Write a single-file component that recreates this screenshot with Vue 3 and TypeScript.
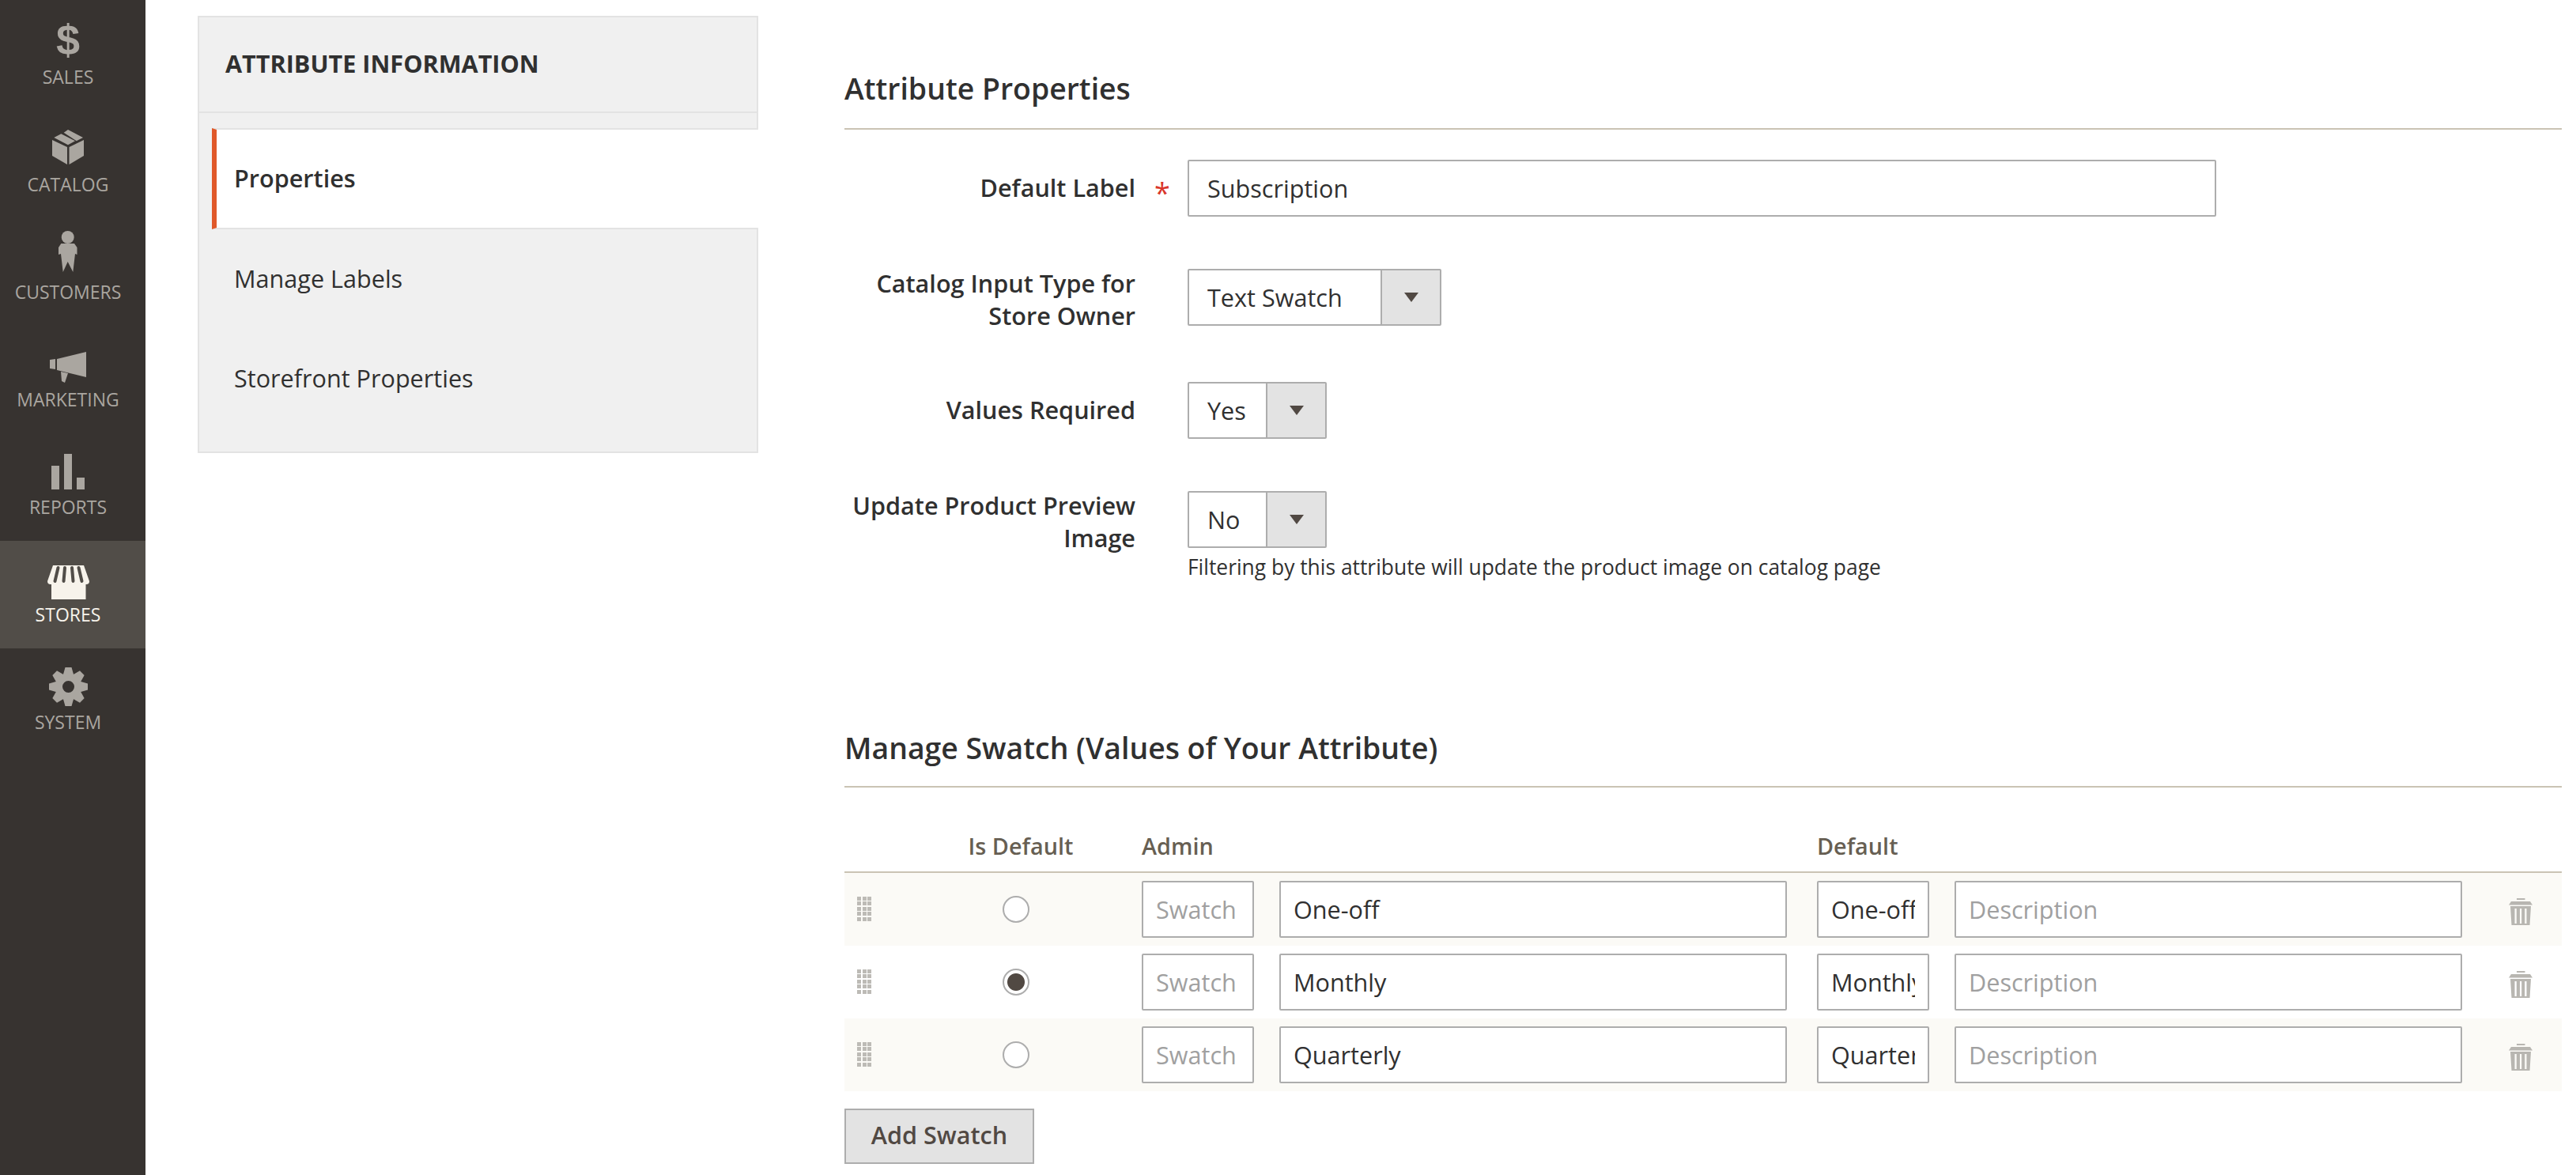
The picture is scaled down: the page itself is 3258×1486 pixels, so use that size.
<template>
  <div class="admin">
    <nav class="sidebar">
      <a class="nav-item">
        <span class="nav-icon"><span class="dollar">$</span></span>
        <span class="nav-label">SALES</span>
      </a>
      <a class="nav-item">
        <span class="nav-icon">
          <svg width="40" height="44" viewBox="0 0 40 44" fill="currentColor">
            <polygon points="0,13 19,22 19,44 0,33"></polygon>
            <polygon points="21.5,22 40,13 40,33 21.5,44"></polygon>
            <polygon points="2.3,10 11.3,5.3 29,14.3 20,19.3"></polygon>
            <polygon points="14.7,3.7 20,0 39,10 30.7,14.3"></polygon>
          </svg>
        </span>
        <span class="nav-label">CATALOG</span>
      </a>
      <a class="nav-item">
        <span class="nav-icon">
          <svg class="icon-customers" width="24" height="52" viewBox="0 0 24 52" fill="currentColor">
            <circle cx="11.7" cy="8" r="8"></circle>
            <polygon points="3.3,16 20,16 23.5,21 23.5,30 21,29 18.3,52 11.7,39 5.7,52 3,29 0,30 0,21"></polygon>
          </svg>
        </span>
        <span class="nav-label">CUSTOMERS</span>
      </a>
      <a class="nav-item">
        <span class="nav-icon">
          <svg class="icon-marketing" width="46" height="39" viewBox="0 0 46 39" fill="currentColor">
            <polygon points="0,10 7,9 7,22 0,21"></polygon>
            <polygon points="9,9 46,0 46,32 9,23"></polygon>
            <polygon points="14,25 23,27 19,39 15,37"></polygon>
          </svg>
        </span>
        <span class="nav-label">MARKETING</span>
      </a>
      <a class="nav-item">
        <span class="nav-icon">
          <svg class="icon-reports" width="42" height="45" viewBox="0 0 42 45" fill="currentColor">
            <rect x="0" y="15" width="10" height="30"></rect>
            <rect x="16" y="0" width="10" height="45"></rect>
            <rect x="32" y="30" width="10" height="15"></rect>
          </svg>
        </span>
        <span class="nav-label">REPORTS</span>
      </a>
      <a class="nav-item active">
        <span class="nav-icon">
          <svg class="icon-stores" width="53" height="43" viewBox="0 0 53 43" fill="currentColor">
            <rect x="5" y="20" width="43.5" height="23"></rect>
            <path d="M7 0H46L53 20Q53 24 49 24H4Q0 24 0 20Z"></path>
            <path d="M13.5 3L9.5 20M22 3L20.5 20M31 3L32.5 20M39.5 3L43.5 20" fill="none" stroke="#514d48" stroke-width="4" stroke-linecap="round"></path>
          </svg>
        </span>
        <span class="nav-label">STORES</span>
      </a>
      <a class="nav-item">
        <span class="nav-icon">
          <svg class="icon-system" width="49" height="49" viewBox="-24.5 -24.5 49 49" fill="currentColor">
            <circle r="12" fill="none" stroke="currentColor" stroke-width="9"></circle>
            <polygon
              v-for="angle in gearTeeth"
              :key="angle"
              points="-7,-14 -4,-24.5 4,-24.5 7,-14"
              :transform="`rotate(${angle})`"
            ></polygon>
          </svg>
        </span>
        <span class="nav-label">SYSTEM</span>
      </a>
    </nav>

    <div class="page">
      <aside class="tabs">
        <h3 class="tabs-title">ATTRIBUTE INFORMATION</h3>
        <ul class="tabs-list">
          <li class="tab active">Properties</li>
          <li class="tab">Manage Labels</li>
          <li class="tab">Storefront Properties</li>
        </ul>
      </aside>

      <main class="content">
        <h2 class="section-title">Attribute Properties</h2>

        <div class="form-row">
          <label class="form-label">Default Label<span class="required">*</span></label>
          <input class="text-input wide" type="text" value="Subscription" />
        </div>

        <div class="form-row two-line">
          <label class="form-label">Catalog Input Type for Store Owner</label>
          <div class="select">
            <span class="select-value long">Text Swatch</span>
            <span class="select-arrow"></span>
          </div>
        </div>

        <div class="form-row">
          <label class="form-label">Values Required</label>
          <div class="select">
            <span class="select-value">Yes</span>
            <span class="select-arrow"></span>
          </div>
        </div>

        <div class="form-row last">
          <label class="form-label">Update Product Preview Image</label>
          <div>
            <div class="select">
              <span class="select-value">No</span>
              <span class="select-arrow"></span>
            </div>
            <p class="note">Filtering by this attribute will update the product image on catalog page</p>
          </div>
        </div>

        <h2 class="section-title swatch-title">Manage Swatch (Values of Your Attribute)</h2>

        <div class="swatch-head">
          <span class="head-default">Is Default</span>
          <span class="head-admin">Admin</span>
          <span class="head-store">Default</span>
        </div>

        <div class="swatch-rows">
          <div v-for="row in swatches" :key="row.name" class="swatch-row">
            <span class="drag-handle"><i v-for="n in 15" :key="n"></i></span>
            <input class="radio" type="radio" name="is-default" :checked="row.isDefault" />
            <input class="text-input swatch-narrow" type="text" placeholder="Swatch" />
            <input class="text-input swatch-wide" type="text" :value="row.name" />
            <input class="text-input swatch-narrow" type="text" :value="row.name" />
            <input class="text-input swatch-wide" type="text" placeholder="Description" />
            <span class="trash">
              <svg width="30" height="34" viewBox="0 0 30 34" fill="currentColor">
                <rect x="10" y="0" width="10.5" height="2"></rect>
                <polygon points="3,4 27,4 30,8.5 0,8.5"></polygon>
                <path fill-rule="evenodd" d="M2 10H28L26.5 34H3.5ZM7.5 13V32H9.8V13ZM14 13V32H16.2V13ZM20.2 13V32H22.5V13Z"></path>
              </svg>
            </span>
          </div>
        </div>

        <button class="add-swatch" type="button">Add Swatch</button>
      </main>
    </div>
  </div>
</template>

<script setup lang="ts">
interface SwatchRow {
  name: string
  isDefault: boolean
}

const gearTeeth: number[] = [0, 45, 90, 135, 180, 225, 270, 315]

const swatches: SwatchRow[] = [
  { name: 'One-off', isDefault: false },
  { name: 'Monthly', isDefault: true },
  { name: 'Quarterly', isDefault: false }
]
</script>

<style>
html,
body {
  margin: 0;
  background: #fff;
  overflow: hidden;
}
</style>

<style scoped>
.admin {
  display: flex;
  height: 1486px;
  overflow: hidden;
  font-family: 'Open Sans', 'Liberation Sans', sans-serif;
  font-size: 30.6px;
  color: #303030;
}

.sidebar {
  flex: 0 0 184px;
  padding-top: 4px;
  background: #373330;
  box-sizing: border-box;
}

.nav-item {
  display: flex;
  flex-direction: column;
  align-items: center;
  height: 136px;
  padding: 24px 12px 0 0;
  box-sizing: border-box;
  color: #aaa6a0;
}

.nav-item.active {
  background: #514d48;
  color: #f7f3eb;
}

.nav-icon {
  display: flex;
  align-items: center;
  justify-content: center;
  height: 44px;
}

.icon-customers {
  margin-bottom: 8px;
}

.icon-marketing {
  margin-top: 12px;
}

.icon-reports {
  margin-top: 4px;
}

.icon-stores {
  margin-top: 12px;
}

.icon-system {
  margin-top: 5px;
}

.dollar {
  font-family: 'Liberation Sans', sans-serif;
  font-size: 54px;
  font-weight: 700;
  line-height: 44px;
}

.nav-label {
  margin-top: 9px;
  font-size: 23px;
  line-height: 32px;
}

.page {
  flex: 1;
  display: flex;
  align-items: flex-start;
  gap: 109px;
  padding: 0 18px 0 66px;
  min-width: 0;
}

.tabs {
  flex: 0 0 709px;
  margin-top: 20px;
  box-sizing: border-box;
  background: #f0f0f0;
  border: 2px solid #e3e3e3;
}

.tabs-title {
  margin: 0;
  padding: 0 0 0 33px;
  height: 119px;
  line-height: 117px;
  border-bottom: 2px solid #e3e3e3;
  font-size: 30.6px;
  font-weight: 700;
  color: #303030;
}

.tabs-list {
  list-style: none;
  margin: 0;
  padding: 19px 0 29px 16px;
}

.tab {
  height: 126px;
  line-height: 125px;
  padding-left: 28px;
}

.tab.active {
  box-sizing: border-box;
  height: 128px;
  line-height: 122px;
  margin-right: -2px;
  padding-left: 22px;
  background: #fff;
  border-left: 6px solid #e0592a;
  border-top: 2px solid #e3e3e3;
  border-bottom: 2px solid #e3e3e3;
  font-weight: 600;
}

.content {
  flex: 1;
  min-width: 0;
  padding-top: 88px;
}

.section-title {
  margin: 0 0 38px;
  padding-bottom: 26px;
  border-bottom: 2px solid #cac3b4;
  font-size: 37.4px;
  line-height: 48px;
  font-weight: 600;
  color: #303030;
}

.swatch-title {
  padding-bottom: 24px;
  margin-bottom: 0;
}

.form-row {
  display: flex;
  align-items: flex-start;
  gap: 66px;
  margin-bottom: 66px;
}

.form-row.two-line {
  margin-bottom: 63px;
}

.form-row.last {
  margin-bottom: 187px;
}

.form-label {
  position: relative;
  flex: 0 0 368px;
  margin-top: -2px;
  padding-top: 17px;
  text-align: right;
  font-weight: 600;
  line-height: 41px;
}

.two-line .form-label,
.last .form-label {
  padding-top: 0;
}

.required {
  position: absolute;
  left: 392px;
  top: 23px;
  color: #d9362a;
  font-weight: 400;
  font-size: 36px;
}

.text-input {
  display: block;
  box-sizing: border-box;
  height: 72px;
  padding: 0 16px;
  background: #fff;
  border: 2px solid #adadad;
  border-radius: 2px;
  outline: none;
  font: inherit;
  color: #303030;
}

.text-input::placeholder {
  color: #a0a0a0;
  opacity: 1;
}

.text-input.wide {
  width: 1301px;
  padding: 0 23px;
}

.select {
  display: inline-flex;
  height: 72px;
  box-sizing: border-box;
  background: #fff;
  border: 2px solid #adadad;
  border-radius: 2px;
  line-height: 69px;
}

.select-value {
  width: 99px;
  padding-left: 23px;
  box-sizing: border-box;
  border-right: 2px solid #adadad;
}

.select-value.long {
  width: 244px;
}

.select-arrow {
  display: flex;
  align-items: center;
  justify-content: center;
  width: 73px;
  background: #e3e3e3;
}

.select-arrow::after {
  content: '';
  border-left: 9px solid transparent;
  border-right: 9px solid transparent;
  border-top: 12px solid #514943;
}

.note {
  margin: 6px 0 0;
  font-size: 26.4px;
  line-height: 36px;
}

.swatch-head {
  display: grid;
  grid-template-columns: 106px 222px 864px 1fr;
  align-items: center;
  height: 108px;
  padding-top: 40px;
  box-sizing: border-box;
  border-bottom: 2px solid #cac3b4;
  font-size: 28.8px;
  font-weight: 600;
  color: #675f53;
}

.head-default {
  grid-column: 2;
  text-align: center;
  padding-left: 12px;
}

.head-admin {
  grid-column: 3;
  padding-left: 48px;
}

.head-store {
  grid-column: 4;
  padding-left: 38px;
}

.swatch-row {
  display: grid;
  grid-template-columns: 106px 222px 190px 674px 180px 674px 1fr;
  align-items: center;
  height: 92px;
}

.swatch-row:nth-child(odd) {
  background: #fbfaf6;
}

.drag-handle {
  display: grid;
  grid-template-columns: repeat(3, 5px);
  gap: 1.5px;
  margin-left: 16px;
  margin-top: -2px;
  width: 18px;
}

.drag-handle i {
  display: block;
  height: 5px;
  background: #bdbbb6;
}

.radio {
  appearance: none;
  justify-self: center;
  width: 34px;
  height: 34px;
  margin: 0;
  background: #fff;
  border: 2px solid #adadad;
  border-radius: 50%;
}

.radio:checked {
  background: radial-gradient(circle, #514943 0 10.5px, #fff 11.5px);
}

.swatch-narrow {
  justify-self: end;
  width: 142px;
}

.swatch-wide {
  justify-self: end;
  width: 642px;
}

.trash {
  display: flex;
  justify-content: center;
  padding: 5px 0 0 22px;
  color: #b8b6b1;
}

.add-swatch {
  display: block;
  width: 240px;
  height: 70px;
  margin-top: 22px;
  padding: 0 0 5px;
  background: #e3e3e3;
  border: 2px solid #adadad;
  font: inherit;
  font-weight: 600;
  color: #514943;
}
</style>
